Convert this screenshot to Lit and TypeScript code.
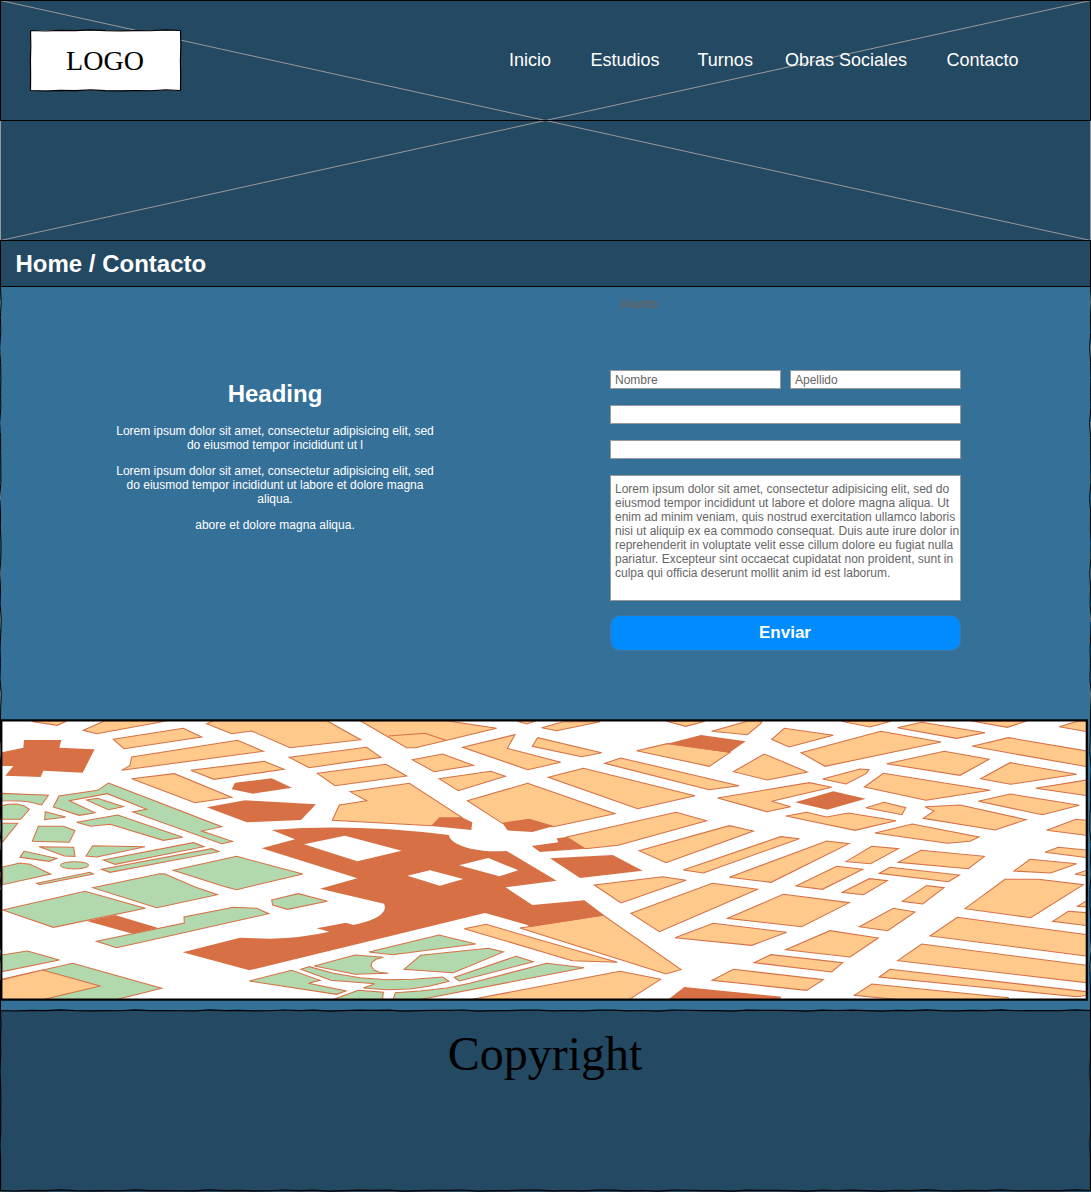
import { LitElement, html, svg, css } from "lit";
import { customElement } from "lit/decorators.js";

type Kind = "o" | "r" | "g" | "w" | "l";
interface Sheet { x: number; y: number; blocks: [Kind, string][]; }

// City blocks, grouped in map sheets. Sheet units are thirds of a pixel.
const sheets: Sheet[] = [
  { x: 0, y: 715, blocks: [
    ["o", "95,18 100,20 172,31 200,18"],
    ["o", "250,46 315,17 500,17 470,23 290,56"],
    ["o", "620,26 640,17 980,17 1082,74 870,98 755,48 695,56"],
    ["o", "340,73 550,40 605,66 372,101"],
    ["o", "395,126 713,76 790,109 365,166 390,151"],
    ["o", "572,166 793,139 852,163 642,193"],
    ["o", "395,191 523,176 695,247 585,263"],
    ["r", "72,75 184,75 178,98 284,103 248,173 130,167 122,186 16,182 40,153 6,153 6,112 70,98"],
    ["r", "705,203 815,190 876,218 760,236 695,223"],
    ["r", "620,277 735,256 948,268 903,315 740,322"],
    ["g", "5,235 145,241 125,270 90,261 60,258 5,257"],
    ["g", "5,272 25,268 50,267 73,273 88,283 62,313 5,313"],
    ["g", "5,325 53,325 5,384"],
    ["g", "325,204 665,335 605,348 697,379 665,386 398,291 440,283 322,236 208,257 285,293 238,301 160,276 177,243 293,226"],
    ["g", "260,255 292,250 370,275 325,284"],
    ["g", "136,290 197,306 134,314"],
    ["g", "230,322 353,300 548,367 490,376 330,328 272,334"],
    ["g", "115,334 190,334 225,347 208,382 97,379"],
    ["g", "118,395 221,397 225,424 193,423"],
    ["g", "72,409 170,430 148,439 60,427"],
    ["g", "278,392 435,395 290,426 258,423"],
    ["g", "310,435 580,383 612,395 345,448"],
    ["g", "305,463 635,401 657,410 330,472"],
  ] },
  { x: 0, y: 855, blocks: [
    ["g", "8,36 60,24 90,28 152,57 8,89"],
    ["g", "110,85 270,52 280,57 118,89"],
    ["g", "520,46 710,4 908,57 710,104 670,94"],
    ["g", "278,98 480,56 495,57 585,96 652,119 470,158"],
    ["g", "8,165 255,109 436,160 160,217"],
    ["r", "260,198 345,180 475,219 398,236"],
    ["g", "290,259 553,204 552,186 700,157 770,160 806,176 350,278"],
    ["g", "5,300 82,288 178,315 5,350"],
    ["g", "5,373 218,325 485,400 340,436 5,436"],
    ["o", "5,374 128,345 300,393 120,436 5,436"],
  ] },
  { x: 270, y: 715, blocks: [
    ["o", "270,17 530,17 680,40 437,98 410,98"],
    ["l", "355,63 465,55 527,76"],
    ["o", "58,127 290,97 333,127 117,158"],
    ["o", "142,175 348,148 410,183 195,212"],
    ["o", "240,230 418,205 575,307 485,332 187,316 208,270 290,257"],
    ["r", "508,307 575,307 607,322 604,345 483,333"],
    ["o", "427,134 518,117 610,151 492,170"],
    ["o", "507,191 662,169 706,184 565,227"],
    ["o", "578,97 735,59 712,100 872,142 773,164"],
    ["o", "787,94 803,68 995,113 935,125"],
    ["o", "740,18 770,27 797,18"],
    ["o", "592,257 773,205 1035,296 850,335 697,325"],
    ["r", "697,323 778,311 852,333 787,351 712,346"],
  ] },
  { x: 270, y: 855, blocks: [
    ["g", "5,135 85,116 172,139 52,163 8,150"],
    ["g", "297,291 507,240 617,267 367,299"],
    ["g", "133,333 255,300 340,307 318,313 306,322 303,333 312,345 328,352 355,355 255,358"],
    ["g", "402,343 452,301 655,280 700,291 550,353"],
    ["g", "93,343 118,335 190,355 270,368 350,374 430,373 518,366 537,379 480,393 420,402 350,404 280,399 315,386 183,376"],
    ["g", "553,367 738,304 790,320 568,378"],
    ["g", "368,438 376,413 450,408 530,399 600,385 830,325 942,338 470,430 420,438"],
    ["g", "180,437 265,406 340,412 337,438"],
    ["g", "-62,378 65,346 150,376 115,385 228,408 200,418"],
    ["o", "583,221 648,208 1042,322 907,317"],
  ] },
  { x: 540, y: 715, blocks: [
    ["o", "5,38 70,20 180,20 50,47"],
    ["o", "80,366 408,292 500,317 235,391 135,401"],
    ["r", "-25,393 55,382 50,370 80,366 137,401 0,411"],
    ["o", "290,107 382,86 570,112 508,154"],
    ["r", "382,86 483,60 617,79 568,113"],
    ["o", "195,145 242,129 597,212 507,224"],
    ["o", "25,187 130,160 465,242 293,281"],
    ["o", "380,19 437,34 495,19"],
    ["o", "515,49 625,18 666,18 663,25 622,59"],
    ["o", "695,73 733,40 880,61 747,96"],
    ["o", "580,170 673,117 802,171 682,195"],
    ["o", "533,249 808,203 875,217 695,259 752,275 680,290"],
    ["o", "297,407 568,332 640,348 378,443"],
    ["o", "430,465 722,365 778,371 490,474"],
    ["r", "30,430 218,420 308,467 120,489"],
  ] },
  { x: 540, y: 855, blocks: [
    ["o", "-60,219 190,181 423,344 378,357"],
    ["o", "163,90 368,65 438,76 243,144"],
    ["o", "273,175 517,85 653,103 358,230"],
    ["o", "405,248 520,205 740,232 635,271"],
    ["o", "-225,437 240,349 362,373 262,437"],
    ["r", "380,437 433,396 725,425 715,437"],
    ["o", "642,323 693,299 908,323 875,351"],
    ["o", "517,376 580,343 850,374 800,406"],
  ] },
  { x: 810, y: 715, blocks: [
    ["o", "-27,113 212,49 393,81 45,154"],
    ["r", "-45,262 70,229 167,251 52,284"],
    ["o", "-72,303 -10,292 50,306 115,294 258,317 135,346 0,318"],
    ["o", "-242,487 50,378 117,386 -117,502"],
    ["o", "95,19 180,36 245,18"],
    ["o", "262,38 335,22 525,53 440,70"],
    ["o", "485,18 592,37 650,18"],
    ["o", "748,35 805,18 830,18 830,50"],
    ["o", "487,94 595,68 830,108 830,155"],
    ["o", "230,146 403,109 537,133 450,181"],
    ["o", "512,191 600,143 800,178 602,208"],
    ["o", "677,220 830,195 830,242"],
    ["o", "38,192 150,162 177,164 168,176 108,207"],
    ["o", "163,216 220,175 540,226 348,256"],
    ["o", "168,278 222,262 287,278 276,299"],
    ["o", "345,275 450,270 648,314 555,345 340,310 372,288"],
    ["o", "505,259 600,237 808,271 697,299"],
    ["o", "710,346 798,313 830,316 830,361"],
    ["o", "195,354 307,327 507,366 480,379 412,385"],
    ["o", "705,412 745,397 830,405 830,428"],
    ["o", "108,440 185,394 265,401 182,446"],
    ["o", "265,442 333,406 523,424 475,461"],
  ] },
  { x: 810, y: 855, blocks: [
    ["o", "612,48 660,13 800,26 722,54"],
    ["o", "795,58 832,45 832,63"],
    ["o", "-42,93 80,34 158,43 37,103"],
    ["o", "97,112 178,71 232,77 160,119"],
    ["o", "208,55 240,37 448,60 415,80"],
    ["o", "277,139 350,92 402,98 338,147"],
    ["o", "465,161 585,73 685,73 820,89 662,188"],
    ["o", "802,154 832,136 832,156"],
    ["o", "728,199 775,169 830,173 830,212"],
    ["o", "148,215 250,160 315,171 233,227"],
    ["o", "-247,190 -80,118 118,143 -25,215"],
    ["o", "-73,284 60,227 205,249 120,306"],
    ["o", "360,243 442,187 830,239 830,303"],
    ["o", "263,317 335,267 830,331 830,383"],
    ["o", "208,366 240,343 830,410 830,421 800,425"],
    ["o", "133,421 185,387 595,428 595,440 330,440"],
  ] },
];

// Deterministic hand-drawn line between two points.
const rough = (x1: number, y1: number, x2: number, y2: number, amp = 0.7) => {
  const horizontal = y1 === y2;
  const len = horizontal ? x2 - x1 : y2 - y1;
  const n = Math.max(2, Math.round(len / 15));
  let d = `M${x1},${y1}`;
  for (let i = 1; i <= n; i++) {
    const t = (len * i) / n;
    const o = i === n ? 0 : Math.sin(i * 1.9) * amp * Math.cos(i * 0.7);
    d += horizontal ? ` L${x1 + t},${y1 + o}` : ` L${x1 + o},${y1 + t}`;
  }
  return d;
};

@customElement("city-map")
class CityMap extends LitElement {
  static styles = css`
    :host { display: block; }
    svg { display: block; }
    .o { fill: #ffc98b; stroke: #d57146; stroke-width: 3.2; }
    .g { fill: #b2d9ae; stroke: #d57146; stroke-width: 3.2; }
    .l { fill: none; stroke: #d57146; stroke-width: 3.2; }
    .r { fill: #d77145; }
    .w { fill: #fff; }
  `;
  render() {
    return html`<svg width="1089" height="282" viewBox="0 719 1089 282">
      <rect x="1.3" y="720.4" width="1085.5" height="279.2" fill="#fff"></rect>
      <clipPath id="frame"><rect x="2" y="721" width="1084" height="278"></rect></clipPath>
      <g clip-path="url(#frame)">
        ${sheets.map((s) => svg`<g transform="translate(${s.x} ${s.y}) scale(.33333)">
          ${s.blocks.map(([k, p]) => k === "l"
            ? svg`<polyline class="l" points=${p}></polyline>`
            : svg`<polygon class=${k} points=${p}></polygon>`)}
        </g>`)}
        <ellipse cx="74.5" cy="865.3" rx="14.2" ry="3.6" fill="#b2d9ae" stroke="#d57146"></ellipse>
        <g transform="translate(270 715) scale(.33333)">
          <path class="r" d="M5,345 Q250,325 537,360 C540,385 590,402 640,407 Q670,410 710,408 L860,497 707,517 787,570 943,556 1003,601 780,636 772,630 645,594 -62,766 -262,712 -90,668 0,671 Q100,668 178,650 L140,640 228,623 250,630 Q345,610 345,575 L342,566 150,521 262,490 -25,400 75,373Z"></path>
          <polygon class="w" points="102,388 225,362 395,407 262,439"></polygon>
          <polygon class="w" points="412,482 480,466 580,492 510,512"></polygon>
          <polygon class="w" points="567,451 655,429 745,466 688,484"></polygon>
        </g>
      </g>
      <rect x="1.3" y="720.4" width="1085.5" height="279.2" fill="none" stroke="#000" stroke-width="2.2"></rect>
    </svg>`;
  }
}

@customElement("app-root")
class AppRoot extends LitElement {
  static styles = css`
    :host { display: block; width: 1091px; height: 1192px; overflow: hidden; background: #fff;
      font-family: "Liberation Sans", Arial, sans-serif; color: #fff; }
    * { box-sizing: border-box; }
    .hero { position: relative; height: 240px; background: #244962; }
    .cross { position: absolute; left: 0; top: 0; }
    .head { position: relative; height: 121px; border: 1px solid #000; display: flex; align-items: center;
      justify-content: space-between; padding: 0 71.5px 0 29px; }
    .logo { display: grid; width: 151px; height: 61px; place-items: center; color: #000;
      font: 28px/32px "Liberation Serif", serif; }
    .logo > * { grid-area: 1 / 1; }
    .logo span { margin-right: 1px; }
    nav { display: flex; font-size: 18px; line-height: 20px; white-space: nowrap; padding-bottom: 2px; }
    nav span + span { margin-left: 39.5px; }
    nav span:nth-child(3) { margin-left: 38px; }
    nav span:nth-child(4) { margin-left: 32px; }
    .crumb { height: 47px; border: 1px solid #000; background: #244962; font-size: 24px; font-weight: bold;
      line-height: 45px; padding-left: 14.5px; }
    .main { height: 723px; background: #357099; }
    .cols { display: grid; grid-template-columns: 550px 1fr; height: 432px; }
    .intro { padding: 92px 110px 0; text-align: center; font-size: 12px; line-height: 14px; }
    h2 { margin: 0 0 16px; font-size: 24px; line-height: 29px; }
    .intro p { margin: 0 0 12px; white-space: nowrap; }
    form { padding: 10px 0 0 60px; width: 411px; display: flex; flex-direction: column; font-size: 12px;
      line-height: 14px; color: #666; }
    .ghost { height: 14px; margin: 0 0 59px 10px; text-shadow: 0 0 1px #666; }
    .names { display: flex; gap: 9px; margin-bottom: 16px; }
    .field { height: 19px; border: 1px solid #999; background: #fff; padding: 2px 4px; flex: 1 0 auto; width: 171px; }
    .wide { flex: none; width: 351px; margin-bottom: 16px; }
    .area { height: 126px; border: 1px solid #999; background: #fff; padding: 6px 0 0 4px; white-space: nowrap;
      width: 351px; margin-bottom: 14px; }
    .send { height: 36px; width: 351px; border: 1px solid #44759c; border-radius: 10px;
      background: #008cff; color: #fff; font-size: 17px; font-weight: bold; line-height: 34px; text-align: center;
      padding-right: 1px; }
    .foot { height: 182px; background: #244962; color: #000; font: 48px/55px "Liberation Serif", serif;
      text-align: center; padding: 16px 1px 0 0; }
    .edges { position: absolute; left: 0; top: 0; pointer-events: none; }
    .page { position: relative; }
  `;
  render() {
    const nav = ["Inicio", "Estudios", "Turnos", "Obras Sociales", "Contacto"];
    return html`<div class="page">
      <div class="hero">
        <svg class="cross" width="1091" height="240" fill="none" stroke="#999">
          <path d="M.5 0V240M1090.5 0V240M.5 .5L1090.5 240.5M.5 240.5L1090.5 .5"></path>
        </svg>
        <div class="head">
          <div class="logo">
            <svg width="151" height="61" stroke="#000" stroke-width="1.2" overflow="visible">
              <rect x=".5" y=".5" width="150" height="60" fill="#fff" stroke="none"></rect>
              <path fill="none" d="${rough(0.5, 0.5, 150.5, 0.5)} ${rough(0.5, 60.5, 150.5, 60.5)} ${rough(0.5, 0.5, 0.5, 60.5, 0.4)} ${rough(150.5, 0.5, 150.5, 60.5, 0.6)}"></path>
            </svg>
            <span>LOGO</span>
          </div>
          <nav>${nav.map((n) => html`<span>${n}</span>`)}</nav>
        </div>
      </div>
      <div class="crumb">Home / Contacto</div>
      <div class="main">
        <div class="cols">
          <div class="intro">
            <h2>Heading</h2>
            <p>Lorem ipsum dolor sit amet, consectetur adipisicing elit, sed<br>do eiusmod tempor incididunt ut l</p>
            <p>Lorem ipsum dolor sit amet, consectetur adipisicing elit, sed<br>do eiusmod tempor incididunt ut labore et dolore magna<br>aliqua.</p>
            <p>abore et dolore magna aliqua.</p>
          </div>
          <form>
            <div class="ghost">Asunto</div>
            <div class="names"><div class="field">Nombre</div><div class="field">Apellido</div></div>
            <div class="field wide"></div>
            <div class="field wide"></div>
            <div class="area">Lorem ipsum dolor sit amet, consectetur adipisicing elit, sed do<br>eiusmod tempor incididunt ut labore et dolore magna aliqua. Ut<br>enim ad minim veniam, quis nostrud exercitation ullamco laboris<br>nisi ut aliquip ex ea commodo consequat. Duis aute irure dolor in<br>reprehenderit in voluptate velit esse cillum dolore eu fugiat nulla<br>pariatur. Excepteur sint occaecat cupidatat non proident, sunt in<br>culpa qui officia deserunt mollit anim id est laborum.</div>
            <div class="send">Enviar</div>
          </form>
        </div>
        <city-map></city-map>
      </div>
      <div class="foot">Copyright</div>
      <svg class="edges" width="1091" height="1192" fill="none" stroke="#000" stroke-width="1.2">
        <path stroke="#8a9499" stroke-width="1" stroke-dasharray="30 22 18 60" d="M.5 300V1010M1090.5 292V1010"></path>
        <path stroke-width="1" d="${rough(0.5, 287, 0.5, 1010, 0.9)} ${rough(1090.5, 287, 1090.5, 1010, 0.9)}"></path>
        <path d="${rough(0.5, 1010.5, 1090.5, 1010.5)} ${rough(0.5, 1190.5, 1090.5, 1190.5)} ${rough(0.5, 1010, 0.5, 1190, 0.6)} ${rough(1090.5, 1010, 1090.5, 1190, 0.6)}"></path>
      </svg>
    </div>`;
  }
}
